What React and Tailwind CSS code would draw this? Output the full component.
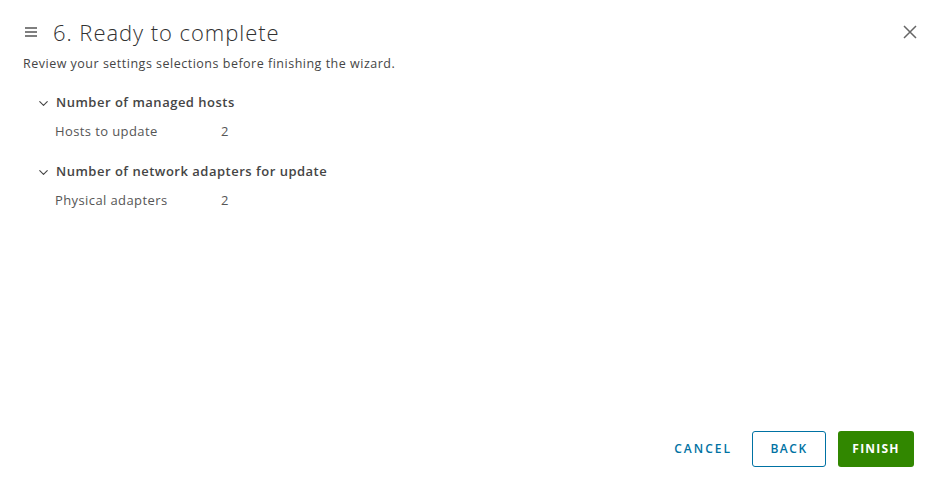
import { ChevronDown } from "lucide-react";

const sections = [
  {
    title: "Number of managed hosts",
    rows: [{ label: "Hosts to update", value: "2" }],
  },
  {
    title: "Number of network adapters for update",
    rows: [{ label: "Physical adapters", value: "2" }],
  },
];

export default function App() {
  return (
    <div
      className="w-[936px] h-[490px] bg-white flex flex-col text-[#313131]"
      style={{ fontFamily: "'Open Sans', Lato, sans-serif" }}
    >
      <div className="flex items-center pl-6 pr-4 pt-[17px]">
        <svg width="14" height="12" viewBox="0 0 14 12" className="mr-[15px]">
          <path d="M1 2h12M1 6h12M1 10h12" stroke="#565656" strokeWidth="1.4" />
        </svg>
        <h1 className="text-[22px] leading-[30px] font-light tracking-[0.95px] text-[#313131] flex-1">
          6. Ready to complete
        </h1>
        <svg width="16" height="16" viewBox="0 0 16 16" className="mr-[2px]">
          <path d="M2 2l12 12M14 2L2 14" stroke="#666" strokeWidth="1.5" />
        </svg>
      </div>
      <p className="pl-[23px] mt-[8px] text-[12.5px] leading-[18px] tracking-[0.5px] text-[#454545]">
        Review your settings selections before finishing the wizard.
      </p>

      <div className="pl-[36px] mt-[21px] flex flex-col gap-[22px]">
        {sections.map((s) => (
          <div key={s.title}>
            <div className="flex items-center h-[18px]">
              <ChevronDown size={15} strokeWidth={1.8} className="text-[#454545] mr-[5px]" />
              <span className="text-[13px] font-semibold tracking-[0.5px] text-[#454545]">{s.title}</span>
            </div>
            {s.rows.map((r) => (
              <div
                key={r.label}
                className="flex items-center h-[18px] mt-[11px] pl-[19px] text-[13px] tracking-[0.4px] text-[#565656]"
              >
                <span className="w-[166px]">{r.label}</span>
                <span>{r.value}</span>
              </div>
            ))}
          </div>
        ))}
      </div>

      <div className="mt-auto mb-[23px] pr-[22px] flex justify-end items-center">
        <button className="h-9 mr-5 text-[12px] font-semibold tracking-[2px] text-[#0072a3]">CANCEL</button>
        <button className="h-9 w-[74px] mr-3 rounded-[3px] border border-[#0072a3] text-[12px] font-semibold tracking-[1.5px] text-[#0072a3]">
          BACK
        </button>
        <button className="h-9 w-[76px] rounded-[3px] bg-[#318700] text-[12px] font-bold tracking-[1.2px] text-white">
          FINISH
        </button>
      </div>
    </div>
  );
}
